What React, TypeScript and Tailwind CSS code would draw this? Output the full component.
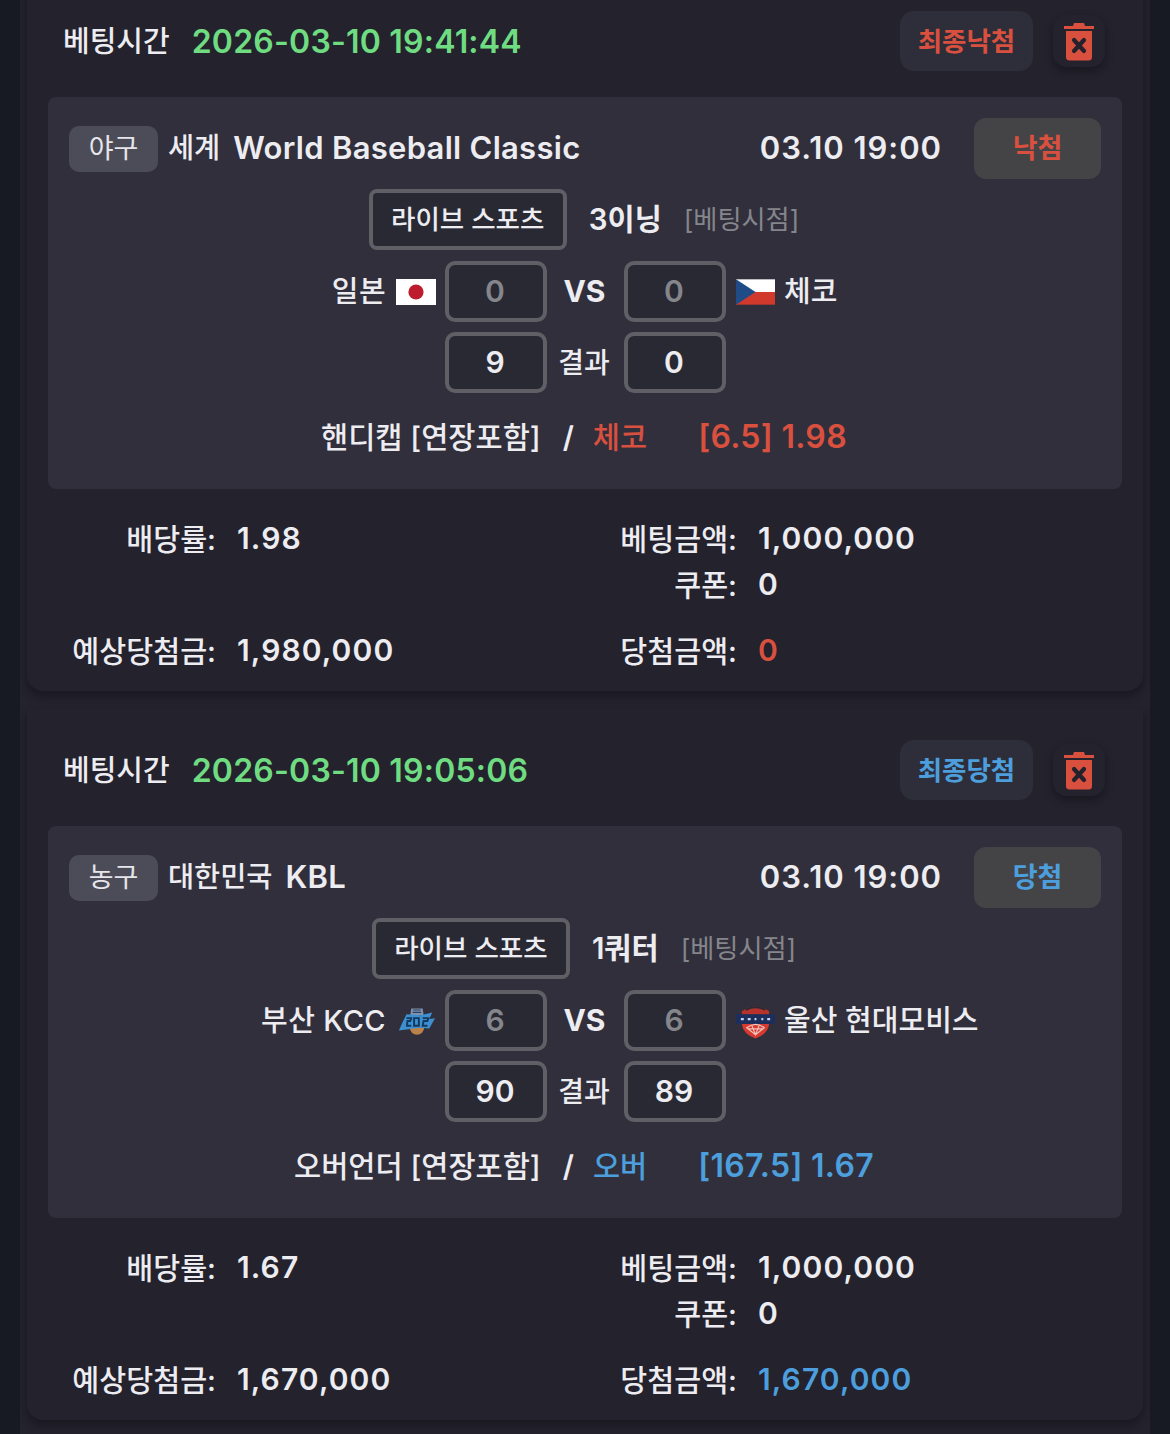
import type { ReactNode } from "react";

const FONT = "font-['Inter','Noto_Sans_CJK_KR',sans-serif]";

function TrashIcon() {
  return (
    <svg width="32" height="40" viewBox="0 0 32 40">
      <path d="M1 8 V5 H10 L11 2 H21 L22 5 H31 V8 Z" fill="#d9503f" />
      <path d="M3 10 H29 V36 Q29 39.5 25.5 39.5 H6.5 Q3 39.5 3 36 Z" fill="#d9503f" />
      <path d="M11 19 L21 30 M21 19 L11 30" stroke="#22222c" strokeWidth="4.2" strokeLinecap="round" />
    </svg>
  );
}

function JapanFlag() {
  return (
    <svg width="40" height="26" viewBox="0 0 40 26">
      <rect width="40" height="26" fill="#fff" />
      <circle cx="20" cy="13" r="7.6" fill="#bc1c2c" />
    </svg>
  );
}

function CzechFlag() {
  return (
    <svg width="39" height="26" viewBox="0 0 40 26">
      <rect width="40" height="13" fill="#fff" />
      <rect y="13" width="40" height="13" fill="#d0392b" />
      <path d="M0 0 L20 13 L0 26 Z" fill="#1f4c86" />
    </svg>
  );
}

function KccLogo() {
  return (
    <svg width="40" height="30" viewBox="-2 0 42 30">
      <circle cx="20" cy="22" r="7.5" fill="#b9824a" />
      <path d="M14 2 H26 L27 9 H13 Z" fill="#7f93ad" />
      <path d="M16 3.5 H24 M15.5 6 H24.5" stroke="#2c3e63" strokeWidth="1.2" />
      <path d="M1 25 L5 16 L9 8 L24 9 L36 6 L33 13 L39 12 L33 23 L22 22 L9 24 Z" fill="#3d8fd0" />
      <path d="M9 12 H14 L13 15 H10 L9.5 20 H14 M17 12 H22 V20 H17 Z M26 12 H32 L31 15 H27 L26 20 H31" fill="none" stroke="#12395f" strokeWidth="2" />
    </svg>
  );
}

function MobisLogo() {
  return (
    <svg width="39" height="36" viewBox="0 0 40 36">
      <path d="M6 8 Q20 -2 34 8 V13 H6 Z" fill="#b8322c" />
      <path d="M10 6.5 Q20 1.5 30 6.5" fill="none" stroke="#2a2a35" strokeWidth="2" />
      <path d="M6 21 H34 Q33 31 20 36 Q7 31 6 21 Z" fill="#d63a30" />
      <rect x="0" y="11" width="40" height="10" fill="#1c2f5c" />
      <path d="M5 16 H8 M12 16 H15 M19 16 H21 M26 16 H28 M32 16 H35" stroke="#c8d2e8" strokeWidth="2.4" />
      <path d="M11 25 Q20 18 29 25 L20 32 Z M16 22 L20 32 L24 22 M13 26 H27" fill="none" stroke="#f4c4bc" strokeWidth="1.2" />
    </svg>
  );
}

function ScoreBox({ children, dim }: { children: ReactNode; dim?: boolean }) {
  return (
    <div
      className={`flex h-[61px] w-[102px] items-center justify-center rounded-[10px] border-[4px] border-[#5f5f65] bg-[#292934] pr-[2px] text-[30px] font-semibold ${
        dim ? "text-[#85858c]" : "text-[#ececf1]"
      }`}
    >
      {children}
    </div>
  );
}

function InfoRow({ label, value, tone, className }: { label: string; value?: string; tone?: string; className?: string }) {
  return (
    <>
      <div className={`h-[46px] pr-[21px] text-right text-[29.3px] leading-[49px] font-medium ${className ?? ""}`}>{label}</div>
      <div className={`font-semibold tracking-[1.1px] ${tone ?? ""} ${className ?? ""}`}>{value}</div>
    </>
  );
}

type Bet = {
  time: string;
  won: boolean;
  sport: string;
  leagueKo: string;
  leagueEn: string;
  period: string;
  home: string;
  homeIcon: ReactNode;
  away: string;
  awayIcon: ReactNode;
  start: [string, string];
  result: [string, string];
  market: string;
  pick: string;
  odds: string;
  rate: string;
  expected: string;
  payout: string;
};

const bets: Bet[] = [
  {
    time: "2026-03-10 19:41:44",
    won: false,
    sport: "야구",
    leagueKo: "세계",
    leagueEn: "World Baseball Classic",
    period: "3이닝",
    home: "일본",
    homeIcon: <JapanFlag />,
    away: "체코",
    awayIcon: <CzechFlag />,
    start: ["0", "0"],
    result: ["9", "0"],
    market: "핸디캡 [연장포함]",
    pick: "체코",
    odds: "[6.5] 1.98",
    rate: "1.98",
    expected: "1,980,000",
    payout: "0",
  },
  {
    time: "2026-03-10 19:05:06",
    won: true,
    sport: "농구",
    leagueKo: "대한민국",
    leagueEn: "KBL",
    period: "1쿼터",
    home: "부산 KCC",
    homeIcon: <KccLogo />,
    away: "울산 현대모비스",
    awayIcon: <MobisLogo />,
    start: ["6", "6"],
    result: ["90", "89"],
    market: "오버언더 [연장포함]",
    pick: "오버",
    odds: "[167.5] 1.67",
    rate: "1.67",
    expected: "1,670,000",
    payout: "1,670,000",
  },
];

function BetCard({ bet }: { bet: Bet }) {
  const tone = bet.won ? "text-[#4c9fdc]" : "text-[#d9503f]";
  return (
    <div className="mx-[7px] rounded-b-[16px] bg-[#23222d] px-[21px] pt-[31px] pb-[18px] shadow-[0_5px_8px_rgba(0,0,0,0.28)]">
      <div className="mb-[26px] flex h-[60px] items-center pl-[15px]">
        <span className="pt-px text-[29px] font-medium">베팅시간</span>
        <span className="ml-[22px] pt-px text-[32px] font-semibold tracking-[0.2px] text-[#6fdc82]">{bet.time}</span>
        <div className={`ml-auto flex h-[60px] w-[133px] items-center justify-center rounded-[14px] bg-[#2e2e3a] pt-px text-[26.5px] font-semibold ${tone}`}>
          {bet.won ? "최종당첨" : "최종낙첨"}
        </div>
        <div className="mr-[17px] ml-[20px] flex h-[52px] w-[52px] items-center justify-center rounded-[14px] bg-[#23222d] shadow-[0_4px_8px_rgba(0,0,0,0.3)]">
          <TrashIcon />
        </div>
      </div>

      <div className="h-[392px] rounded-[8px] bg-[#302f3b] px-[21px] pt-[21px]">
        <div className="flex h-[61px] items-center">
          <span className="flex h-[46px] w-[89px] items-center justify-center rounded-[10px] bg-[#4c4c58] pt-[2px] text-[27px] text-[#e6e6ea]">
            {bet.sport}
          </span>
          <span className="ml-[10px] text-[28.4px] font-medium">{bet.leagueKo}</span>
          <span className="ml-[13px] text-[31px] font-semibold tracking-[0.28px]">{bet.leagueEn}</span>
          <span className="mr-[32px] ml-auto text-[31px] font-semibold tracking-[0.95px]">03.10 19:00</span>
          <div className={`flex h-[61px] w-[127px] items-center justify-center rounded-[12px] bg-[#444447] pt-[2px] text-[27px] font-semibold ${tone}`}>
            {bet.won ? "당첨" : "낙첨"}
          </div>
        </div>

        <div className="mt-[10px] flex h-[61px] items-center justify-center gap-[22px] pr-[2px]">
          <span className="flex h-[61px] w-[198px] items-center justify-center rounded-[8px] border-[4px] border-[#5f5f65] bg-[#292934] pt-px text-[26.5px] font-medium">
            라이브 스포츠
          </span>
          <span className="text-[29.5px] font-semibold">{bet.period}</span>
          <span className="text-[26.2px] text-[#85858c]">[베팅시점]</span>
        </div>

        <div className="mt-[11px] grid grid-cols-[376px_102px_77px_102px_1fr] gap-y-[10px]">
          <div className="flex items-center justify-end gap-[10px] pr-[9px] text-[29px] font-medium tracking-[0.4px]">
            {bet.home}
            {bet.homeIcon}
          </div>
          <ScoreBox dim>{bet.start[0]}</ScoreBox>
          <div className="flex items-center justify-center pr-[2px] text-[30px] font-bold">VS</div>
          <ScoreBox dim>{bet.start[1]}</ScoreBox>
          <div className="flex items-center gap-[9px] pl-[10px] text-[29px] font-medium">
            {bet.awayIcon}
            {bet.away}
          </div>

          <div />
          <ScoreBox>{bet.result[0]}</ScoreBox>
          <div className="flex items-center justify-center pr-[3px] text-[28px] font-medium">결과</div>
          <ScoreBox>{bet.result[1]}</ScoreBox>
          <div />
        </div>

        <div className="mt-[20px] flex h-[48px] items-center justify-center pr-[2px] text-[29.5px] font-medium">
          <span>{bet.market}</span>
          <span className="ml-[22px] font-semibold">/</span>
          <span className={`ml-[19px] ${tone}`}>{bet.pick}</span>
          <span className={`ml-[51px] text-[32px] font-semibold tracking-[0.3px] ${tone}`}>{bet.odds}</span>
        </div>
      </div>

      <div className="mt-[26px] grid grid-cols-[189px_306px_215px_1fr] text-[30px] leading-[46px]">
        <InfoRow label="배당률:" value={bet.rate} />
        <InfoRow label="베팅금액:" value="1,000,000" />
        <div />
        <div />
        <InfoRow label="쿠폰:" value="0" />
        <InfoRow label="예상당첨금:" value={bet.expected} className="mt-[20px]" />
        <InfoRow label="당첨금액:" value={bet.payout} tone={tone} className="mt-[20px]" />
      </div>
    </div>
  );
}

export default function App() {
  return (
    <div className={`h-[1434px] overflow-hidden bg-[#171a22] px-5 text-[#ececf1] ${FONT}`}>
      <div className="h-full overflow-hidden bg-[#23222d]">
        <div className="-mt-5 flex flex-col gap-[18px]">
          {bets.map((bet) => (
            <BetCard key={bet.time} bet={bet} />
          ))}
        </div>
      </div>
    </div>
  );
}
